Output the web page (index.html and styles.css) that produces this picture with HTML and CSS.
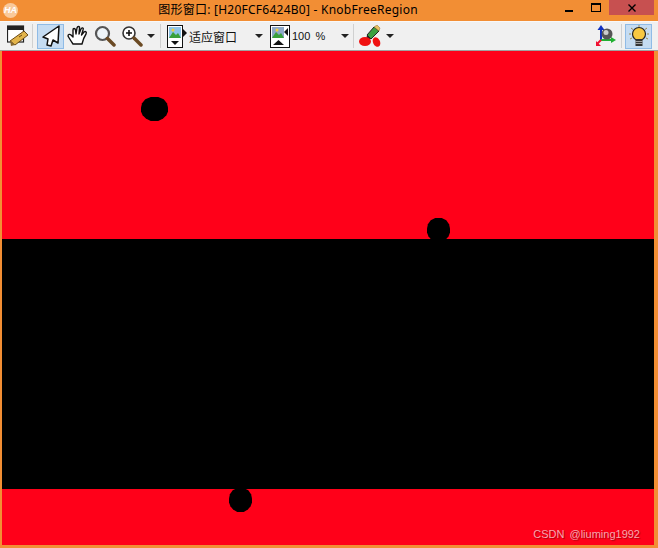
FILE: index.html
```html
<!DOCTYPE html>
<html lang="zh">
<head>
  <meta charset="UTF-8" />
  <title>KnobFreeRegion</title>
  <link rel="stylesheet" href="styles.css">
</head>
<body>
<div class="window">

  <!-- title bar -->
  <div class="titlebar">
    <div class="app-logo">HA</div>
    <div class="title">图形窗口: [H20FCF6424B0] - KnobFreeRegion</div>
    <div class="win-btns">
      <div class="win-btn"><span class="min-mark"></span></div>
      <div class="win-btn"><span class="max-mark"></span></div>
      <div class="win-btn close">
        <svg width="10" height="10" viewBox="0 0 10 10"><path d="M1.500 1.500 L8.500 8.500 M8.500 1.500 L1.500 8.500" stroke="#000" stroke-width="1.400"/></svg>
      </div>
    </div>
  </div>

  <!-- toolbar -->
  <div class="toolbar">
    <div class="tool tool-edit">
      <svg width="21" height="22" viewBox="0 0 21 22">
        <rect x="0.500" y="1" width="16" height="16" fill="#fff" stroke="#222" stroke-width="1.200"/>
        <rect x="0.500" y="1" width="16" height="4" fill="#222"/>
        <path d="M3 16 L17 6 L21 10 L8 20 Z" fill="#e3b44a" stroke="#6b4a14"/>
        <path d="M3 15 L8 20 L4 21 Z" fill="#8a6a30"/>
        <path d="M12 12 L15 10" stroke="#6b4a14"/>
      </svg>
    </div>
    <div class="sep sep-a"></div>
    <div class="tool tool-on tool-arrow">
      <svg width="20" height="22" viewBox="0 0 20 22">
        <path d="M18 1 L2 12 L7 14 L6 20 L10 21 L12 15 L17 18 Z" fill="#fff" stroke="#111" stroke-width="1.500" stroke-linejoin="round"/>
      </svg>
    </div>
    <div class="tool tool-hand">
      <svg width="22" height="22" viewBox="0 0 22 22">
        <path d="M6 19 C4 16 2 13 1 11 C1 9 3 9 4 10 L6 12 L6 5 C6 3 8 3 8.500 5 L9 9 L10 3 C10.500 1 13 1 12.500 3 L12 9 L14 4 C15 2 17 3 16 5 L14.500 10 L17 7 C18.500 6 20 7 19 9 C17 12 16 15 15 19 Z" fill="#fff" stroke="#111" stroke-width="1.400" stroke-linejoin="round"/>
      </svg>
    </div>
    <div class="tool tool-lens">
      <svg width="22" height="22" viewBox="0 0 22 22">
        <circle cx="8.500" cy="8.500" r="6.500" fill="#eef4f8" stroke="#555" stroke-width="2.200"/>
        <path d="M13.500 13.500 L20 20" stroke="#6b4a24" stroke-width="3.500" stroke-linecap="round"/>
      </svg>
    </div>
    <div class="tool tool-zoom">
      <svg width="22" height="22" viewBox="0 0 22 22">
        <circle cx="8" cy="8" r="6" fill="#fff" stroke="#333" stroke-width="1.600"/>
        <path d="M5 8 H11 M8 5 V11" stroke="#111" stroke-width="1.600"/>
        <path d="M13 13 L20 20" stroke="#6b4a24" stroke-width="3.500" stroke-linecap="round"/>
      </svg>
    </div>
    <div class="caret caret-zoom"></div>
    <div class="sep sep-b"></div>
    <div class="tool tool-fit">
      <svg width="21" height="23" viewBox="0 0 21 23">
        <rect x="0.500" y="0.500" width="15" height="22" fill="#fff" stroke="#111"/>
        <rect x="2" y="2" width="12" height="11" fill="#8fc4e8"/>
        <path d="M2 13 L6 7 L9 10 L11 8 L14 13 Z" fill="#3aa03a"/>
        <circle cx="6" cy="5" r="1.500" fill="#f0d040"/>
        <path d="M4 16 H12 L8 20 Z" fill="#111"/>
        <path d="M16 4 L20 8 L16 12 Z" fill="#111"/>
      </svg>
    </div>
    <div class="tool-text fit-label">适应窗口</div>
    <div class="caret caret-fit"></div>
    <div class="tool tool-scale">
      <svg width="20" height="23" viewBox="0 0 20 23">
        <rect x="0.500" y="0.500" width="19" height="22" fill="#fff" stroke="#111"/>
        <rect x="2" y="2" width="12" height="11" fill="#8fa8c8"/>
        <path d="M2 13 L6 7 L9 10 L11 8 L14 13 Z" fill="#3aa03a"/>
        <circle cx="7" cy="5" r="1.500" fill="#f0d040"/>
        <path d="M3 20 H14 L8.500 15 Z" fill="#111"/>
        <path d="M18 3 L14 7 L18 11 Z" fill="#111"/>
      </svg>
    </div>
    <div class="tool-text scale-label">100 %</div>
    <div class="caret caret-scale"></div>
    <div class="sep sep-c"></div>
    <div class="tool tool-paint">
      <svg width="22" height="22" viewBox="0 0 22 22">
        <path d="M8 10 L15 2 L20 6 L12 14 Z" fill="#3aa040" stroke="#222"/>
        <path d="M15 2 L18 0 L21 3 L20 6 Z" fill="#e8c060" stroke="#8a6a30" stroke-width="0.500"/>
        <path d="M8 10 L12 14 L7 15 Z" fill="#222"/>
        <ellipse cx="6" cy="16.500" rx="6" ry="4.500" fill="#f01010"/>
        <ellipse cx="17.500" cy="17" rx="3.500" ry="5" fill="#f01010" transform="rotate(-25 17.500 17)"/>
      </svg>
    </div>
    <div class="caret caret-paint"></div>
    <div class="tool-right">
      <div class="tool tool-axes">
        <svg width="21" height="22" viewBox="0 0 21 22">
          <path d="M5 15 V4" stroke="#1030c0" stroke-width="2"/>
          <path d="M5 0 L8.500 5 H1.500 Z" fill="#1030c0"/>
          <path d="M5 15 H17" stroke="#20b030" stroke-width="2"/>
          <path d="M20 15 L15 12 V18 Z" fill="#20b030"/>
          <path d="M5 15 L1.500 18.500" stroke="#f01030" stroke-width="2"/>
          <path d="M0 21 V16 L5 21 Z" fill="#f01030"/>
          <circle cx="11" cy="9" r="5.500" fill="#555"/>
          <circle cx="10" cy="7.500" r="2.500" fill="#ccc"/>
        </svg>
      </div>
      <div class="sep sep-d"></div>
      <div class="tool tool-on tool-bulb">
        <svg width="22" height="22" viewBox="0 0 22 22">
          <path d="M1 9 H3 M19 9 H21 M3 3 L5 4.500 M19 3 L17 4.500 M11 0 V2 M2 14 L4 13 M20 14 L18 13" stroke="#9a8a50" stroke-width="1"/>
          <circle cx="11" cy="9" r="6.500" fill="#f8c840" stroke="#222" stroke-width="1.200"/>
          <rect x="7.500" y="14" width="7" height="7" fill="#333"/>
          <path d="M7.500 16.500 H14.500 M7.500 18.500 H14.500" stroke="#bbb" stroke-width="0.800"/>
        </svg>
      </div>
    </div>
  </div>

  <!-- image area -->
  <div class="canvas">
    <div class="band-top"></div>
    <div class="band-mid"></div>
    <div class="band-bottom"></div>
    <div class="blob blob-1"></div>
    <div class="blob blob-2"></div>
    <div class="blob blob-3"></div>
    <div class="watermark">CSDN @liuming1992</div>
  </div>

</div>
</body>
</html>
```

FILE: styles.css
```css
* { margin: 0; padding: 0; box-sizing: border-box; }

html, body {
  width: 658px;
  height: 548px;
  overflow: hidden;
}

body {
  font-family: "Noto Sans", "Noto Sans CJK SC", sans-serif;
  background: #f28e34;
}

.window {
  display: flex;
  flex-direction: column;
  height: 548px;
}

/* title bar */
.titlebar {
  position: relative;
  display: flex;
  justify-content: center;
  height: 21px;
  padding-right: 82px;
  background: #f28e34;
}

.app-logo {
  position: absolute;
  top: 3px;
  left: 3px;
  width: 15px;
  height: 15px;
  border-radius: 50%;
  background: #f9c99a;
  color: #fff;
  font: italic bold 9px/15px "Liberation Sans", sans-serif;
  text-align: center;
}

.title {
  font-size: 12px;
  line-height: 20px;
  letter-spacing: 0.25px;
  color: #000;
  white-space: nowrap;
}

.win-btns {
  position: absolute;
  top: 0;
  right: 4px;
  display: flex;
}

.win-btn {
  display: flex;
  align-items: center;
  justify-content: center;
  width: 27px;
  height: 15px;
}

.win-btn.close {
  width: 45px;
  background: #c75050;
}

.min-mark {
  width: 8px;
  height: 2px;
  margin-top: 7px;
  background: #000;
}

.max-mark {
  width: 10px;
  height: 9px;
  border: 1px solid #000;
  border-top-width: 2px;
}

/* toolbar */
.toolbar {
  display: flex;
  align-items: center;
  height: 30px;
  padding: 0 6px 0 7px;
  background: #f0f0f0;
  border-top: 1px solid #f8f8f8;
  border-bottom: 1px solid #a0a0a0;
}

.tool {
  display: flex;
  align-items: center;
  justify-content: center;
  height: 25px;
}

.tool-on {
  background: #c5dcf2;
  border: 1px solid #8fbbe6;
}

.tool-edit { width: 21px; }
.tool-arrow { width: 27px; }
.tool-hand { width: 22px; margin-left: 3px; }
.tool-lens { width: 22px; margin-left: 5px; }
.tool-zoom { width: 22px; margin-left: 5px; }
.tool-fit { width: 21px; margin-left: 6px; }
.tool-scale { width: 20px; }
.tool-paint { width: 22px; margin-left: 5px; }
.tool-axes { width: 21px; }
.tool-bulb { width: 27px; }

.tool-text {
  font-size: 12px;
  color: #111;
  white-space: nowrap;
}

.fit-label {
  width: 48px;
  margin-left: 1px;
  font-family: "Noto Sans CJK SC", sans-serif;
}

.scale-label {
  width: 32px;
  margin-left: 2px;
  font-family: "Liberation Sans", sans-serif;
  font-size: 11px;
  word-spacing: 2px;
}

.caret {
  width: 0;
  height: 0;
  border-left: 4px solid transparent;
  border-right: 4px solid transparent;
  border-top: 4px solid #222;
}

.caret-zoom { margin-left: 4px; }
.caret-fit { margin-left: 18px; margin-right: 7px; }
.caret-scale { margin-left: 17px; }
.caret-paint { margin-left: 5px; }

.sep {
  width: 1px;
  height: 24px;
  background: #d0d0d0;
}

.sep-a { margin: 0 4px; }
.sep-b { margin-left: 5px; }
.sep-c { margin-left: 4px; }
.sep-d { margin: 0 3px 0 4px; }

.tool-right {
  display: flex;
  align-items: center;
  margin-left: auto;
}

/* image area */
.canvas {
  position: relative;
  display: flex;
  flex-direction: column;
  width: 652px;
  height: 494px;
  margin-left: 2px;
  overflow: hidden;
}

.band-top {
  height: 188px;
  background: #ff0019;
}

.band-mid {
  height: 250px;
  background: #000;
}

.band-bottom {
  height: 56px;
  background: #ff0019;
}

/* blobs sit on the picture, so they keep picture coordinates */
.blob {
  position: absolute;
  background: #000;
  clip-path: polygon(36% 0, 64% 0, 84% 9%, 96% 26%, 100% 44%, 100% 60%, 94% 76%, 82% 90%, 64% 100%, 36% 100%, 18% 90%, 6% 76%, 0 60%, 0 44%, 4% 26%, 16% 9%);
}

.blob-1 { left: 139px; top: 46px; width: 27px; height: 24px; }
.blob-2 { left: 425px; top: 167px; width: 23px; height: 24px; }
.blob-3 { left: 227px; top: 437px; width: 23px; height: 24px; }

.watermark {
  position: absolute;
  right: 14px;
  bottom: 5px;
  font-family: "Liberation Sans", sans-serif;
  font-size: 11px;
  word-spacing: 2px;
  color: #f7a5ae;
  text-shadow: 1px 1px 1px #a8000f;
}
```
